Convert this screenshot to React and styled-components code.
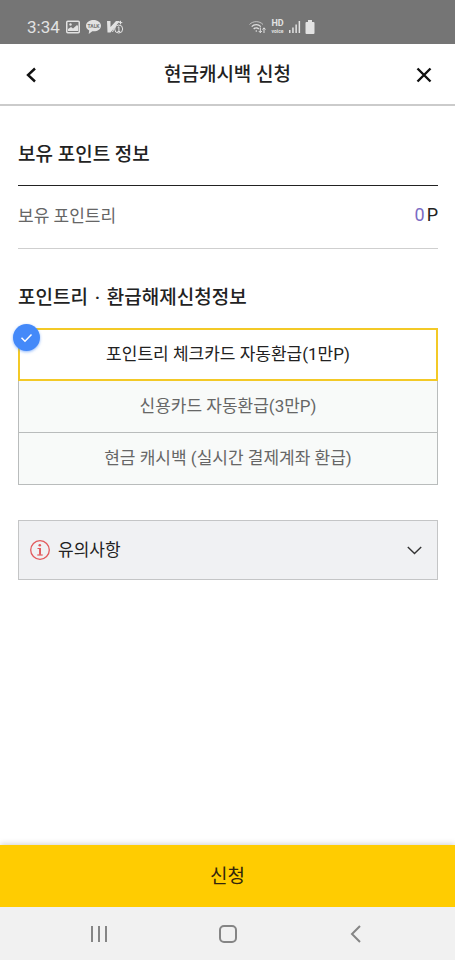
import React, { useState } from 'react'
import styled, { createGlobalStyle } from 'styled-components'

const GlobalStyle = createGlobalStyle`
  * {
    box-sizing: border-box;
  }
  body {
    margin: 0;
    background: #fff;
    color: #222;
    font-family: Roboto, "Noto Sans CJK KR", sans-serif;
  }
  button {
    border: 0;
    padding: 0;
    background: transparent;
    color: inherit;
    font-family: inherit;
    cursor: pointer;
  }
  svg {
    display: block;
  }
`

const Page = styled.div`
  display: flex;
  flex-direction: column;
  min-height: 100vh;
`

const StatusBar = styled.div`
  display: flex;
  align-items: center;
  justify-content: space-between;
  height: 44px;
  padding: 10px 140px 0 27px;
  background: #757575;
  color: #e2e2e2;
`

const StatusGroup = styled.div`
  display: flex;
  align-items: center;
  gap: ${(props) => props.$gap}px;
`

const Clock = styled.time`
  font-size: 17px;
  line-height: 20px;
  font-weight: 400;
`

const Header = styled.header`
  display: flex;
  align-items: center;
  justify-content: space-between;
  height: 62px;
  padding: 2px 18px 0;
  border-bottom: 2px solid #cbcbcb;
`

const Title = styled.h1`
  margin: 0;
  font-size: 19px;
  line-height: 28px;
  font-weight: 500;
`

const IconButton = styled.button`
  display: flex;
  align-items: center;
  justify-content: center;
  width: 26px;
  height: 40px;
`

const Main = styled.main`
  flex: 1;
  padding: 35px 17px 34px 18px;
`

const SectionTitle = styled.h2`
  margin: 0;
  font-size: 19px;
  line-height: 28px;
  font-weight: 500;
`

const Dot = styled.span`
  margin: 0 2px;
`

const PointRow = styled.div`
  display: flex;
  align-items: center;
  justify-content: space-between;
  height: 64px;
  margin: 16px 0 35px;
  padding-bottom: 2px;
  border-top: 1px solid #222;
  border-bottom: 1px solid #cfcfcf;
  color: #666;
  font-size: 17px;
  line-height: 24px;
`

const Amount = styled.span`
  display: flex;
  gap: 2px;
  padding-bottom: 2px;
  color: #222;
  font-size: 18px;
`

const Point = styled.strong`
  color: #7b6cc4;
  font-weight: 400;
`

const Options = styled.fieldset`
  display: flex;
  flex-direction: column;
  min-width: 0;
  margin: 16px 0 35px;
  padding: 0;
  border: 0;
`

const Option = styled.label`
  position: relative;
  display: flex;
  align-items: center;
  justify-content: center;
  height: 53px;
  padding-bottom: 2px;
  border: ${(props) => (props.$checked ? '2px solid #f3c926' : '1px solid #b9bcbc')};
  background: ${(props) => (props.$checked ? '#fff' : '#f8faf9')};
  color: ${(props) => (props.$checked ? '#222' : '#666')};
  z-index: ${(props) => (props.$checked ? 1 : 0)};
  font-size: 17px;
  line-height: 24px;
  cursor: pointer;

  & + & {
    margin-top: -1px;
  }
`

const Radio = styled.input`
  position: absolute;
  inset: 0;
  margin: 0;
  opacity: 0;
  cursor: pointer;
`

const CheckBadge = styled.span`
  position: absolute;
  top: -6px;
  left: -7px;
  display: flex;
  align-items: center;
  justify-content: center;
  width: 27px;
  height: 27px;
  border-radius: 50%;
  background: #4489f9;
  box-shadow: 0 1px 3px rgba(68, 137, 249, 0.6);
`

const Notice = styled.button`
  display: flex;
  align-items: center;
  width: 100%;
  height: 60px;
  padding: 0 15px 0 11px;
  border: 1px solid #c4c5c6;
  background: #f0f1f3;
  color: #222;
  font-size: 17px;
  line-height: 24px;
`

const NoticeLabel = styled.span`
  flex: 1;
  padding-left: 8px;
  text-align: left;
`

const Submit = styled.button`
  height: 62px;
  padding-top: 2px;
  background: #ffcc01;
  box-shadow: 0 -1px 6px rgba(0, 0, 0, 0.18);
  color: #33260c;
  font-size: 19px;
  line-height: 28px;
`

const SystemNav = styled.nav`
  display: flex;
  align-items: center;
  justify-content: space-between;
  height: 53px;
  padding: 0 19%;
  background: #f1f1f1;
  color: #858585;
`

const PictureIcon = () => (
  <svg width="14" height="14" viewBox="0 0 14 14">
    <rect x="0.75" y="1.25" width="12.5" height="11.5" rx="1" fill="none" stroke="currentColor" strokeWidth="1.5" />
    <circle cx="4.5" cy="4.5" r="1.2" fill="currentColor" />
    <path d="M2 11V9l3-2 2 1.5L11 5l1 1v5z" fill="currentColor" />
  </svg>
)

const TalkIcon = () => (
  <svg width="15" height="14" viewBox="0 0 15 14">
    <path d="M7.5 0C3.3 0 0 2.5 0 5.8c0 2 1.2 3.7 3.2 4.7L2.7 14l3.6-2.700c5 .5 8.700-2 8.700-5.500C15 2.500 11.700 0 7.500 0z" fill="currentColor" />
    <text x="7.5" y="7.8" textAnchor="middle" fontSize="5" fontWeight="700" fill="#757575">TALK</text>
  </svg>
)

const GuardIcon = () => (
  <svg width="17" height="14" viewBox="0 0 17 14">
    <path d="M0 1h3.500v6L9 1h4L3.500 12.500H.5z" fill="currentColor" />
    <circle cx="11.700" cy="9" r="4" fill="#757575" stroke="currentColor" />
    <path d="M10.700 7.600l1.200-.8v4.700M10.500 11.500h2.600M8 6.500L5.500 12M13.500 .8v3.600M11.700 2.600h3.600" fill="none" stroke="currentColor" />
  </svg>
)

const WifiIcon = () => (
  <svg width="17" height="14" viewBox="0 0 17 14" fill="none" stroke="currentColor">
    <path d="M.5 4.500C4 .7 10.500.7 14 4.500" strokeWidth="1" opacity=".7" />
    <path d="M2.700 6.700c2.500-2.700 6.600-2.700 9.100 0" strokeWidth="1.200" />
    <path d="M4.700 8.900c1.400-1.400 3.700-1.400 5.100 0" strokeWidth="1.400" />
    <circle cx="7.300" cy="11" r=".8" fill="currentColor" stroke="none" />
    <path d="M11.300 7.500v5M9.800 11l1.500 1.700 1.500-1.700M15 13V8M13.500 9.500L15 7.800l1.500 1.700" />
  </svg>
)

const HdVoiceIcon = () => (
  <svg width="15" height="14" viewBox="0 0 15 14" fill="currentColor" overflow="visible">
    <text x="7.5" y="6" textAnchor="middle" fontSize="9" fontWeight="700">HD</text>
    <text x="7.5" y="13" textAnchor="middle" fontSize="5" fontWeight="700">voice</text>
  </svg>
)

const SignalIcon = () => (
  <svg width="12" height="14" viewBox="0 0 12 14" fill="currentColor">
    <rect x="0" y="10" width="1.5" height="3" />
    <rect x="3.2" y="7.5" width="1.5" height="5.5" />
    <rect x="6.4" y="4.5" width="1.5" height="8.5" />
    <rect x="9.6" y="1" width="1.5" height="12" />
  </svg>
)

const BatteryIcon = () => (
  <svg width="10" height="14" viewBox="0 0 10 14" fill="currentColor">
    <path d="M3 0h4v2h1.500q1 0 1 1v10q0 1-1 1h-7q-1 0-1-1V3q0-1 1-1H3z" />
  </svg>
)

const options = [
  { id: 'check', label: '포인트리 체크카드 자동환급(1만P)' },
  { id: 'credit', label: '신용카드 자동환급(3만P)' },
  { id: 'cash', label: '현금 캐시백 (실시간 결제계좌 환급)' },
]

export default function App() {
  const [selected, setSelected] = useState('check')

  return (
    <Page>
      <GlobalStyle />
      <StatusBar>
        <StatusGroup $gap={6}>
          <Clock>3:34</Clock>
          <PictureIcon />
          <TalkIcon />
          <GuardIcon />
        </StatusGroup>
        <StatusGroup $gap={4}>
          <WifiIcon />
          <HdVoiceIcon />
          <SignalIcon />
          <BatteryIcon />
        </StatusGroup>
      </StatusBar>

      <Header>
        <IconButton type="button" aria-label="뒤로">
          <svg width="12" height="16" viewBox="0 0 12 16" fill="none" stroke="#111" strokeWidth="2.4">
            <path d="M10 1.500L3 8l7 6.500" />
          </svg>
        </IconButton>
        <Title>현금캐시백 신청</Title>
        <IconButton type="button" aria-label="닫기">
          <svg width="16" height="16" viewBox="0 0 16 16" fill="none" stroke="#111" strokeWidth="2.4">
            <path d="M1.500 1.500l13 13M14.500 1.500l-13 13" />
          </svg>
        </IconButton>
      </Header>

      <Main>
        <SectionTitle>보유 포인트 정보</SectionTitle>
        <PointRow>
          <span>보유 포인트리</span>
          <Amount>
            <Point>0</Point>P
          </Amount>
        </PointRow>

        <SectionTitle id="refund-title">
          포인트리 <Dot>·</Dot> 환급해제신청정보
        </SectionTitle>
        <Options aria-labelledby="refund-title">
          {options.map(({ id, label }) => (
            <Option key={id} $checked={selected === id}>
              <Radio
                type="radio"
                name="refund"
                value={id}
                checked={selected === id}
                onChange={() => setSelected(id)}
              />
              {selected === id && (
                <CheckBadge>
                  <svg width="13" height="10" viewBox="0 0 13 10" fill="none" stroke="#fff" strokeWidth="1.5">
                    <path d="M1.500 4.800L5 8.300l6.500-6.800" />
                  </svg>
                </CheckBadge>
              )}
              {label}
            </Option>
          ))}
        </Options>

        <Notice type="button" aria-expanded="false">
          <svg width="20" height="20" viewBox="0 0 20 20" fill="none" stroke="#e2595c">
            <circle cx="10" cy="10" r="9.3" strokeWidth="1.3" />
            <circle cx="9.8" cy="5.3" r="1.3" fill="#e2595c" stroke="none" />
            <path d="M7.500 8.500h2.800v6" strokeWidth="1.2" />
            <path d="M10 8.300v6.400" strokeWidth="1.8" />
            <path d="M7.300 15h5.400" strokeWidth="1.2" />
          </svg>
          <NoticeLabel>유의사항</NoticeLabel>
          <svg width="15" height="9" viewBox="0 0 15 9" fill="none" stroke="#333" strokeWidth="1.4">
            <path d="M.8 1l6.700 6.500L14.200 1" />
          </svg>
        </Notice>
      </Main>

      <Submit type="button">신청</Submit>

      <SystemNav>
        <IconButton type="button" aria-label="최근 앱">
          <svg width="18" height="18" viewBox="0 0 18 18" fill="none" stroke="currentColor" strokeWidth="2">
            <path d="M2 1v16M9 1v16M16 1v16" />
          </svg>
        </IconButton>
        <IconButton type="button" aria-label="홈">
          <svg width="18" height="18" viewBox="0 0 18 18" fill="none" stroke="currentColor" strokeWidth="2">
            <rect x="1" y="1" width="16" height="16" rx="4" />
          </svg>
        </IconButton>
        <IconButton type="button" aria-label="이전">
          <svg width="12" height="18" viewBox="0 0 12 18" fill="none" stroke="currentColor" strokeWidth="2">
            <path d="M10 1L2 9l8 8" />
          </svg>
        </IconButton>
      </SystemNav>
    </Page>
  )
}
